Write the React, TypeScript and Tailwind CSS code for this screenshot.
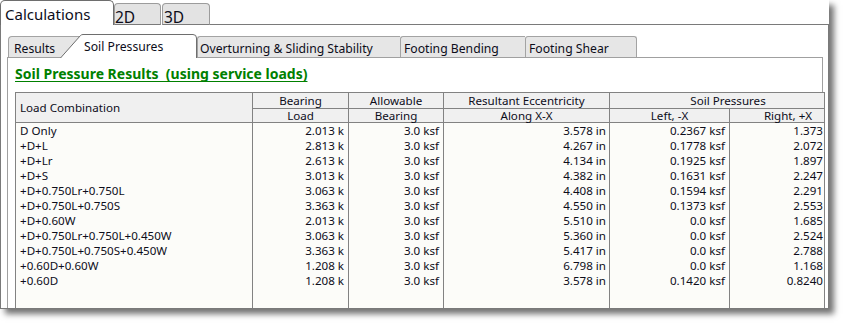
const rows = [
  ["D Only", "2.013 k", "3.0 ksf", "3.578 in", "0.2367 ksf", "1.373"],
  ["+D+L", "2.813 k", "3.0 ksf", "4.267 in", "0.1778 ksf", "2.072"],
  ["+D+Lr", "2.613 k", "3.0 ksf", "4.134 in", "0.1925 ksf", "1.897"],
  ["+D+S", "3.013 k", "3.0 ksf", "4.382 in", "0.1631 ksf", "2.247"],
  ["+D+0.750Lr+0.750L", "3.063 k", "3.0 ksf", "4.408 in", "0.1594 ksf", "2.291"],
  ["+D+0.750L+0.750S", "3.363 k", "3.0 ksf", "4.550 in", "0.1373 ksf", "2.553"],
  ["+D+0.60W", "2.013 k", "3.0 ksf", "5.510 in", "0.0 ksf", "1.685"],
  ["+D+0.750Lr+0.750L+0.450W", "3.063 k", "3.0 ksf", "5.360 in", "0.0 ksf", "2.524"],
  ["+D+0.750L+0.750S+0.450W", "3.363 k", "3.0 ksf", "5.417 in", "0.0 ksf", "2.788"],
  ["+0.60D+0.60W", "1.208 k", "3.0 ksf", "6.798 in", "0.0 ksf", "1.168"],
  ["+0.60D", "1.208 k", "3.0 ksf", "3.578 in", "0.1420 ksf", "0.8240"],
];

// column boxes (width incl. right grid line)
const columns = [
  "w-[237px] border-r border-[#828282] pl-[4px] text-left",
  "w-[96px] border-r border-[#828282] pr-[4px] text-right",
  "w-[95px] border-r border-[#828282] pr-[4px] text-right",
  "w-[166px] border-r border-[#828282] pr-[3px] text-right",
  "w-[120px] border-r border-[#828282] pr-[4px] text-right",
  "w-[94px] pr-[1px] text-right",
];

function ActiveSubTab() {
  return (
    <div className="relative z-10 w-[137px] h-[24px] -ml-[20px] -mb-[1px] shrink-0">
      <svg className="absolute inset-0" width="137" height="24" viewBox="0 0 137 24">
        <path
          d="M0.5 24 L20.5 1.5 Q21.5 0.5 23 0.5 L133 0.5 Q136.5 0.5 136.5 4 L136.5 24"
          fill="#ffffff"
          stroke="#6e6e6e"
          strokeWidth="1"
        />
      </svg>
      <span className="relative block pl-[24px] leading-[26px] whitespace-nowrap">Soil Pressures</span>
    </div>
  );
}

export default function App() {
  return (
    <div className="w-[845px] h-[324px] bg-white font-['Noto_Sans',sans-serif] text-[#0d0d1a]">
      <div className="w-[829px] h-[309px] flex flex-col shadow-[5px_5px_6px_rgba(0,0,0,0.55)]">
        {/* main tabs */}
        <div className="h-[25px] flex items-end shrink-0">
          <div className="w-[114px] h-[25px] shrink-0 bg-white border-t border-x border-[#6e6e6e] rounded-t-[5px] pl-[4px] text-[15px] leading-[27px] whitespace-nowrap">
            Calculations
          </div>
          <div className="w-[47px] h-[22px] shrink-0 bg-[#e3e3e3] border border-[#9c9c9c] border-b-[#7a7a7a] rounded-t-[4px] text-[15.5px] leading-[26px]">
            2D
          </div>
          <div className="w-[48px] h-[22px] ml-[1px] shrink-0 bg-[#e3e3e3] border border-[#9c9c9c] border-b-[#7a7a7a] rounded-t-[4px] pl-[1px] text-[15.5px] leading-[26px]">
            3D
          </div>
          <div className="flex-1 h-full border-b border-[#7a7a7a]" />
        </div>

        {/* window body */}
        <div className="flex-1 min-h-0 flex flex-col border-x border-b border-[#7a7a7a] pt-[9px] pl-[6px] pr-[5px]">
          <div className="h-[23px] shrink-0 flex items-end pl-[1px] text-[12.2px] whitespace-nowrap">
            <div className="w-[72px] h-[21px] shrink-0 bg-[#e6e6e6] border-l border-t border-[#a3a3a3] rounded-tl-[4px] pl-[5px] leading-[23px]">
              Results
            </div>
            <ActiveSubTab />
            <div className="w-[203px] h-[21px] shrink-0 bg-[#e6e6e6] border-l border-t border-[#a3a3a3] rounded-tl-[3px] pl-[2px] leading-[23px]">
              Overturning &amp; Sliding Stability
            </div>
            <div className="w-[125px] h-[21px] shrink-0 bg-[#e6e6e6] border-l border-t border-[#a3a3a3] rounded-tl-[3px] pl-[3px] leading-[23px]">
              Footing Bending
            </div>
            <div className="w-[112px] h-[21px] shrink-0 bg-[#e6e6e6] border-x border-t border-[#a3a3a3] rounded-t-[3px] pl-[3px] leading-[23px]">
              Footing Shear
            </div>
          </div>

          {/* tab page */}
          <div className="flex-1 min-h-0 flex flex-col border-x border-t border-[#a0a0a0] bg-white pl-[7px] pt-[7px]">
            <div className="text-[14px] font-bold leading-[18px] text-[#008000] underline underline-offset-[2px] [text-decoration-skip-ink:none] whitespace-pre">
              Soil Pressure Results  (using service loads)
            </div>

            <div className="mt-[9px] -mr-[3px] flex-1 min-h-0 flex flex-col border-x border-t border-[#828282] text-[11.6px] whitespace-nowrap">
              {/* header */}
              <div className="grid grid-cols-[237px_96px_95px_166px_120px_94px] grid-rows-[16px_14px] bg-[#f0f0f0] shrink-0">
                <div className="row-span-2 border-r border-b border-[#828282] flex items-center pl-[4px]">Load Combination</div>
                <div className="border-r border-b border-[#828282] flex items-center justify-center">Bearing</div>
                <div className="border-r border-b border-[#828282] flex items-center justify-center">Allowable</div>
                <div className="border-r border-b border-[#828282] flex items-center justify-center">Resultant Eccentricity</div>
                <div className="col-span-2 border-b border-[#828282] flex items-center justify-center pl-[22px]">Soil Pressures</div>
                <div className="border-r border-b border-[#828282] flex items-center justify-center">Load</div>
                <div className="border-r border-b border-[#828282] flex items-center justify-center">Bearing</div>
                <div className="border-r border-b border-[#828282] flex items-center justify-center">Along X-X</div>
                <div className="border-r border-b border-[#828282] flex items-center justify-center">Left, -X</div>
                <div className="border-b border-[#828282] flex items-center justify-center pl-[22px]">Right, +X</div>
              </div>

              {/* body */}
              <div className="flex-1 min-h-0 flex bg-[#fcfcf9]">
                {columns.map((cls, ci) => (
                  <div key={ci} className={`${cls} h-full shrink-0 flex flex-col`}>
                    {rows.map((r, ri) => (
                      <div key={ri} className="h-[15px] leading-[15px]">
                        {r[ci]}
                      </div>
                    ))}
                  </div>
                ))}
              </div>
            </div>
          </div>
        </div>
      </div>
    </div>
  );
}
